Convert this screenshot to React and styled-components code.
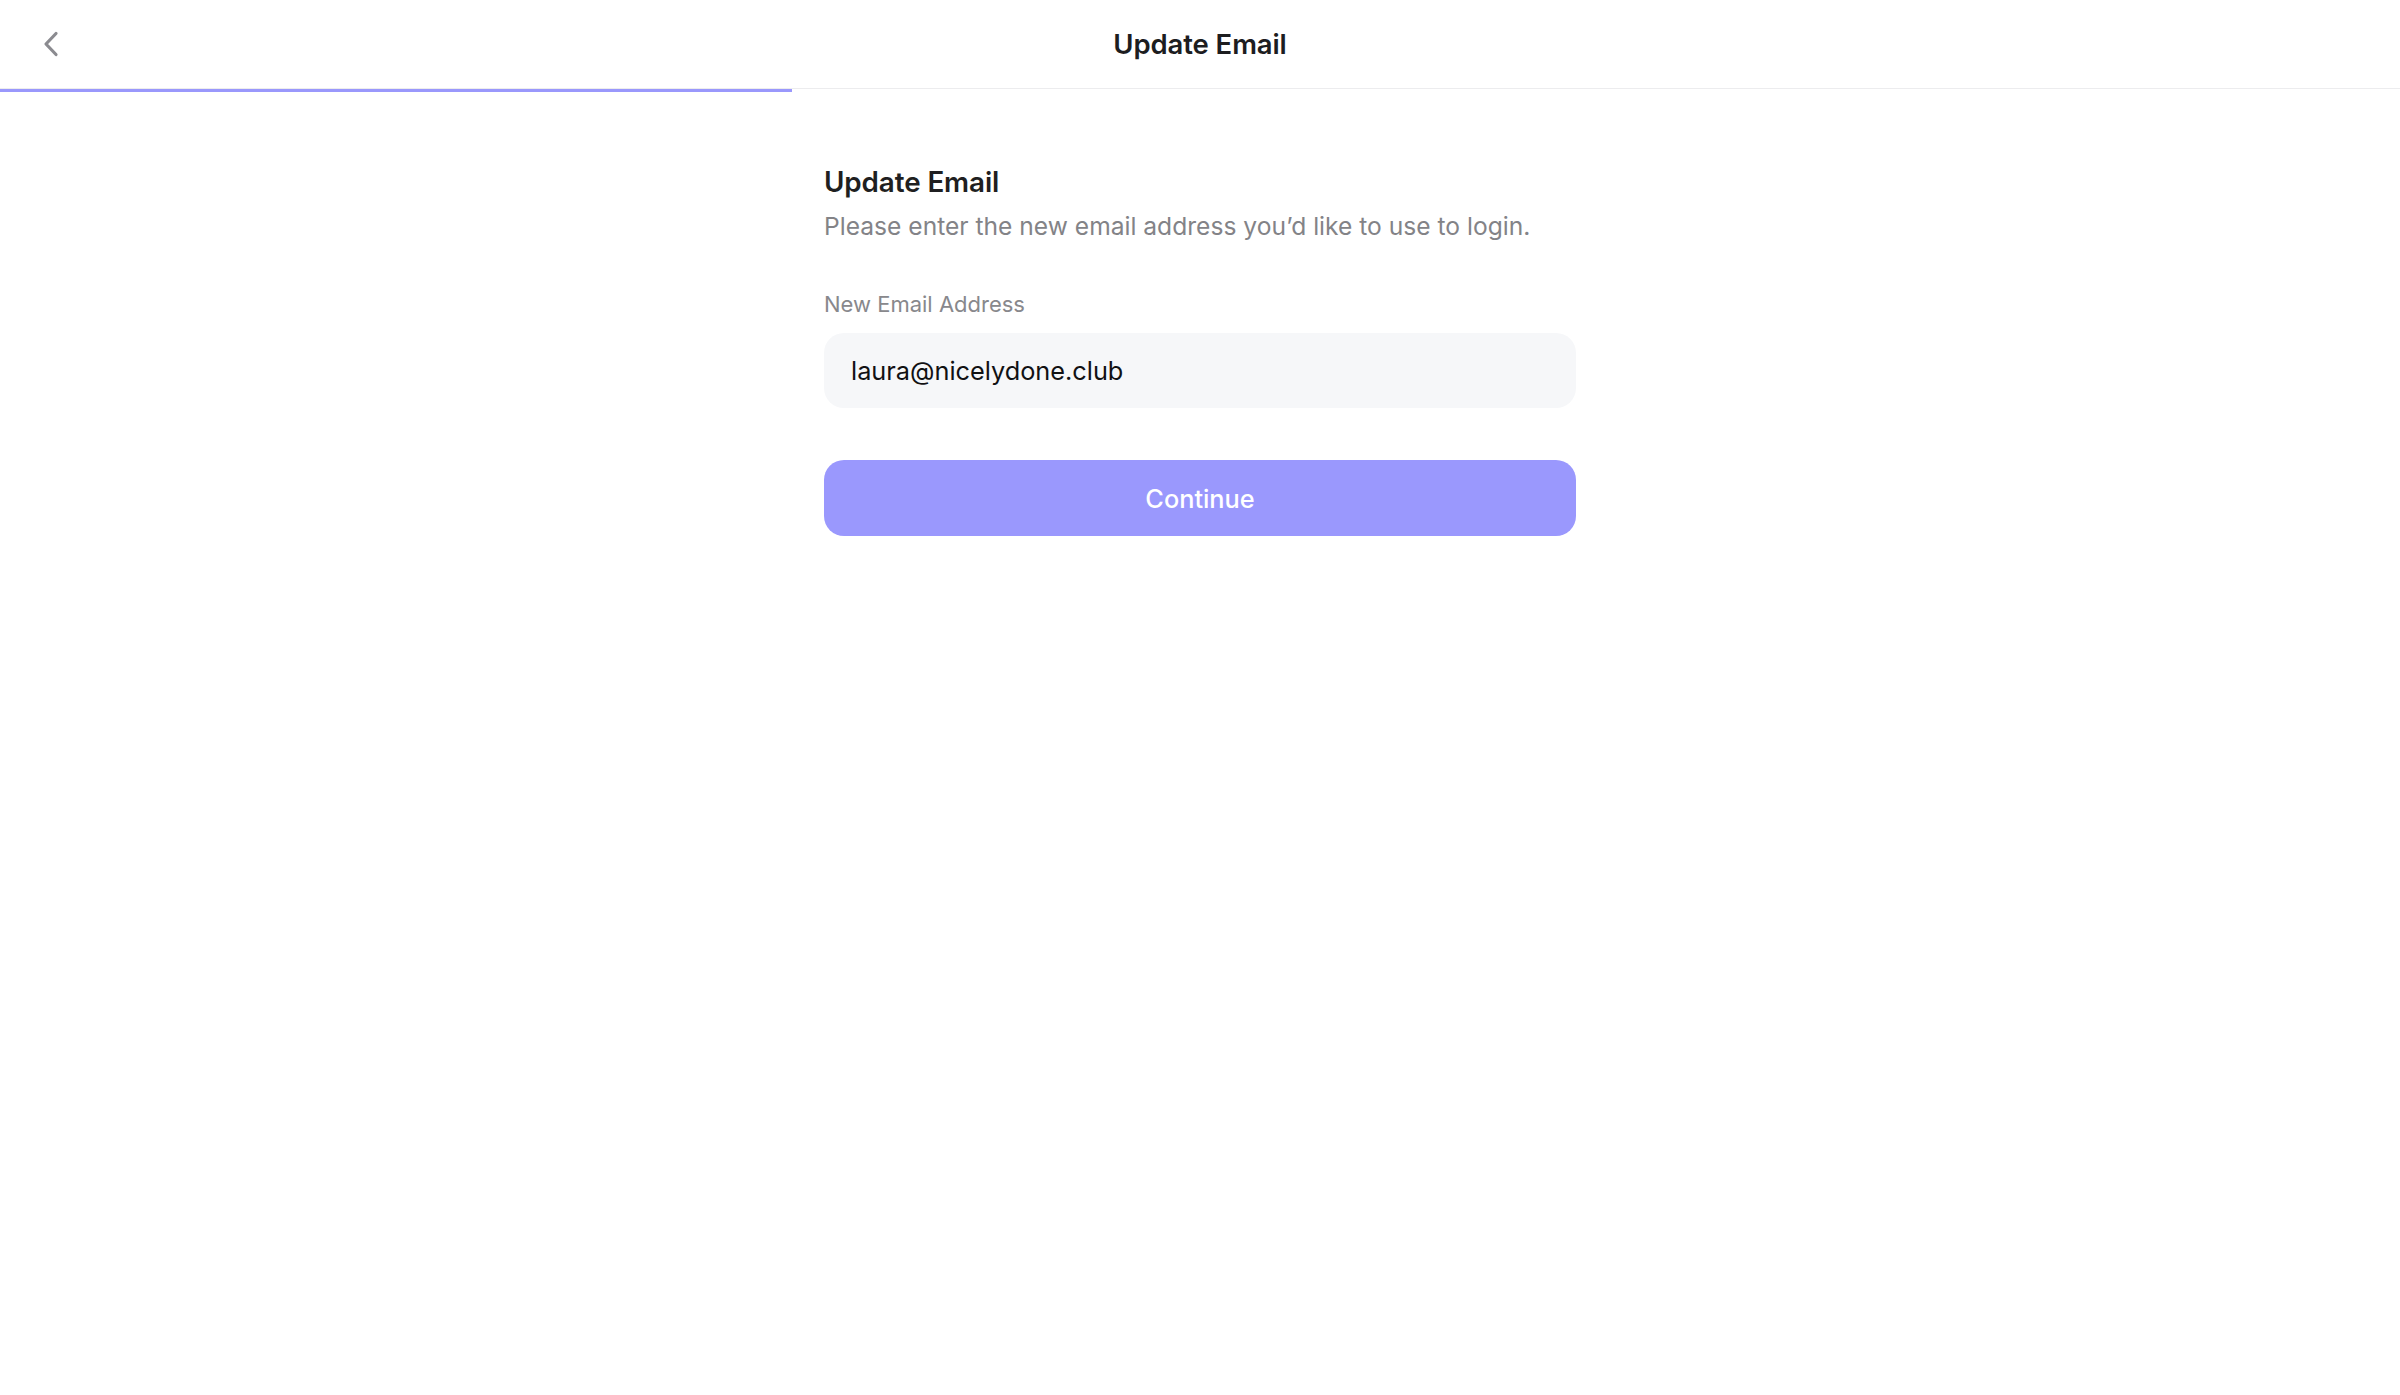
import React from "react";
import styled, { createGlobalStyle } from "styled-components";

const GlobalStyle = createGlobalStyle`
  * { box-sizing: border-box; }
  html, body { margin: 0; padding: 0; background: #ffffff; }
  body { font-family: Inter, "Noto Sans", "Liberation Sans", sans-serif; -webkit-font-smoothing: antialiased; }
`;

const Page = styled.div`
  min-height: 100vh;
  background: #ffffff;
  display: flex;
  flex-direction: column;
`;

const Header = styled.header`
  height: 89px;
  display: grid;
  grid-template-columns: 1fr auto 1fr;
  align-items: center;
  border-bottom: 1px solid #ececee;
  padding: 0 42px;
`;

const BackButton = styled.button`
  justify-self: start;
  width: 18px;
  height: 26px;
  padding: 0;
  border: none;
  background: transparent;
  display: flex;
  align-items: center;
  justify-content: center;
  cursor: pointer;
  color: #8b8b90;
`;

const HeaderTitle = styled.h1`
  margin: 0;
  font-size: 27.5px;
  font-weight: 600;
  color: #1d1d1f;
  letter-spacing: -0.1px;
`;

const ProgressTrack = styled.div`
  height: 3px;
  background: transparent;
`;

const ProgressFill = styled.div`
  height: 100%;
  background: #9a98fc;
`;

const Main = styled.main`
  display: flex;
  justify-content: center;
  padding-top: 74px;
`;

const Form = styled.form`
  width: 752px;
  display: flex;
  flex-direction: column;
`;

const Heading = styled.h2`
  margin: 0;
  font-size: 27.8px;
  line-height: 32px;
  font-weight: 600;
  color: #1f1f21;
  letter-spacing: -0.1px;
`;

const Subtitle = styled.p`
  margin: 11px 0 0;
  font-size: 24.6px;
  line-height: 34px;
  font-weight: 400;
  color: #838387;
`;

const Label = styled.label`
  margin-top: 47px;
  font-size: 22px;
  line-height: 28px;
  color: #88888c;
`;

const Input = styled.input`
  margin-top: 15px;
  height: 75px;
  border: none;
  border-radius: 20px;
  background: #f6f7f9;
  padding: 0 27px;
  font-family: Inter, "Noto Sans", "Liberation Sans", sans-serif;
  font-size: 25.3px;
  color: #111113;
  outline: none;
`;

const PrimaryButton = styled.button`
  margin-top: 52px;
  height: 76px;
  border: none;
  border-radius: 20px;
  background: #9a98fd;
  color: #ffffff;
  font-family: Inter, "Noto Sans", "Liberation Sans", sans-serif;
  font-size: 25.3px;
  font-weight: 500;
  cursor: pointer;
`;

function ChevronLeft() {
  return (
    <svg width="16" height="26" viewBox="0 0 16 26" fill="none">
      <path
        d="M13 2.5 L3 13 L13 23.5"
        stroke="currentColor"
        strokeWidth="3.2"
        strokeLinecap="round"
        strokeLinejoin="round"
      />
    </svg>
  );
}

export default function App() {
  const progress = 33;
  return (
    <>
      <GlobalStyle />
      <Page>
        <Header>
          <BackButton aria-label="Back">
            <ChevronLeft />
          </BackButton>
          <HeaderTitle>Update Email</HeaderTitle>
          <span />
        </Header>
        <ProgressTrack>
          <ProgressFill style={{ width: `${progress}%` }} />
        </ProgressTrack>
        <Main>
          <Form onSubmit={(e) => e.preventDefault()}>
            <Heading>Update Email</Heading>
            <Subtitle>Please enter the new email address you’d like to use to login.</Subtitle>
            <Label htmlFor="email">New Email Address</Label>
            <Input id="email" type="email" defaultValue="laura@nicelydone.club" />
            <PrimaryButton type="submit">Continue</PrimaryButton>
          </Form>
        </Main>
      </Page>
    </>
  );
}
